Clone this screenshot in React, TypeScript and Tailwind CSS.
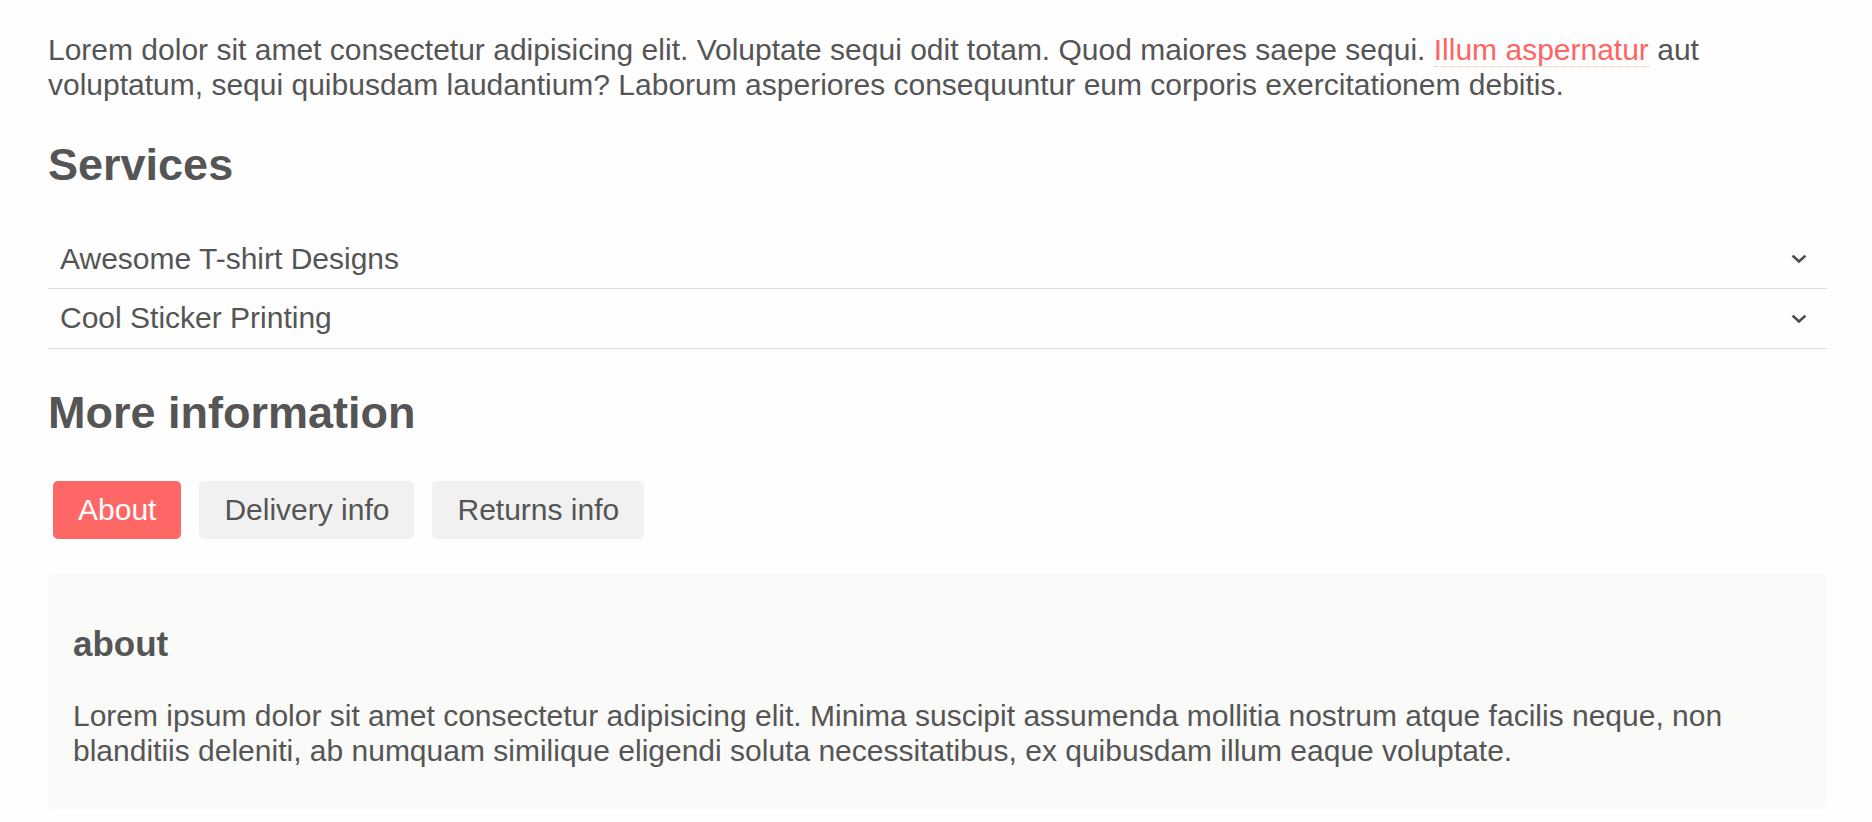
import { useState } from "react";

const services = ["Awesome T-shirt Designs", "Cool Sticker Printing"];

const tabs = [
  {
    id: "about",
    label: "About",
    title: "about",
    text: "Lorem ipsum dolor sit amet consectetur adipisicing elit. Minima suscipit assumenda mollitia nostrum atque facilis neque, non blanditiis deleniti, ab numquam similique eligendi soluta necessitatibus, ex quibusdam illum eaque voluptate.",
  },
  {
    id: "delivery",
    label: "Delivery info",
    title: "delivery",
    text: "Lorem ipsum dolor sit amet consectetur adipisicing elit. Minima suscipit assumenda mollitia nostrum atque facilis neque.",
  },
  {
    id: "returns",
    label: "Returns info",
    title: "returns",
    text: "Lorem ipsum dolor sit amet consectetur adipisicing elit. Ex quibusdam illum eaque voluptate.",
  },
];

const Chevron = () => (
  <svg width="16" height="10" viewBox="0 0 16 10" fill="none" stroke="#4b4b4b" strokeWidth={2.6} strokeLinecap="square">
    <path d="M2.5 2.5 L8 7.5 L13.5 2.5" />
  </svg>
);

export default function App() {
  const [active, setActive] = useState("about");
  const [open, setOpen] = useState<string | null>(null);
  const current = tabs.find((t) => t.id === active)!;

  return (
    <div className="min-h-screen bg-[#fefefe] pl-12 pr-[45px] pt-[33px] font-['Liberation_Sans',Arial,sans-serif] text-[30px] leading-[1.15] text-[#555]">
      <p>
        Lorem dolor sit amet consectetur adipisicing elit. Voluptate sequi odit totam. Quod maiores saepe sequi.{" "}
        <a href="#" className="text-[#ff6464] border-b border-dotted border-[#f7c39c]">
          Illum aspernatur
        </a>{" "}
        aut voluptatum, sequi quibusdam laudantium? Laborum asperiores consequuntur eum corporis exercitationem debitis.
      </p>

      <h2 className="mt-[37px] mb-[39px] text-[45px] font-bold leading-[1.15]">Services</h2>

      <div>
        {services.map((s) => (
          <div key={s} className="border-b border-[#ddd]">
            <button
              onClick={() => setOpen(open === s ? null : s)}
              className="flex w-full items-center justify-between py-3 pl-3 pr-5 text-left"
            >
              <span>{s}</span>
              <Chevron />
            </button>
          </div>
        ))}
      </div>

      <h2 className="mt-[38px] mb-[37px] text-[45px] font-bold leading-[1.15]">More information</h2>

      <div className="flex gap-[18px] p-[5px]">
        {tabs.map((t) => (
          <button
            key={t.id}
            onClick={() => setActive(t.id)}
            className={
              t.id === active
                ? "rounded-[5px] bg-[#ff6666] px-[25px] py-3 text-white"
                : "rounded-[5px] bg-[#f1f1f1] px-[25px] py-3 text-[#555]"
            }
          >
            {t.label}
          </button>
        ))}
      </div>

      <div className="mt-[29px] rounded-[6px] bg-[#fafaf9] px-[25px] pt-4 pb-[11px]">
        <h3 className="mt-[35px] mb-[35px] text-[35px] font-bold leading-[1.15]">{current.title}</h3>
        <p className="mb-[30px]">{current.text}</p>
      </div>
    </div>
  );
}
